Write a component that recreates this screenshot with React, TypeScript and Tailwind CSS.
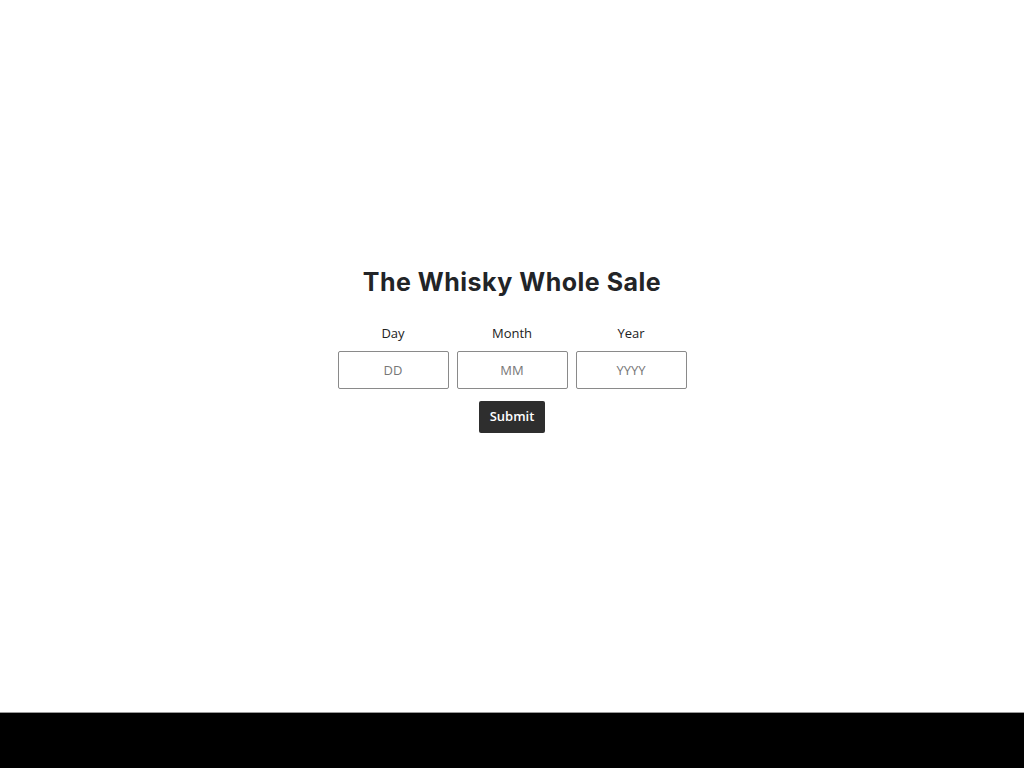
export default function App() {
  const fields = [
    { label: "Day", placeholder: "DD" },
    { label: "Month", placeholder: "MM" },
    { label: "Year", placeholder: "YYYY" },
  ];
  return (
    <div className="flex h-[768px] w-full flex-col bg-white">
      <main className="flex h-[712px] flex-col items-center justify-center pb-[14px]">
        <h1
          className="text-[25px] font-bold leading-[32px] text-[#222427] tracking-[0.5px]"
          style={{ fontFamily: "Inter, 'Noto Sans', sans-serif" }}
        >
          The Whisky Whole Sale
        </h1>
        <form
          className="mt-[26px] flex flex-col items-center"
          style={{ fontFamily: "'Open Sans', sans-serif" }}
          onSubmit={(e) => e.preventDefault()}
        >
          <div className="flex gap-[8px]">
            {fields.map((f) => (
              <label key={f.label} className="flex w-[111px] flex-col items-center">
                <span className="text-[13px] leading-[18px] text-[#222]">{f.label}</span>
                <input
                  placeholder={f.placeholder}
                  className="mt-[9px] h-[38px] w-[111px] rounded-[2px] border border-[#8a8a8a] text-center text-[13px] text-[#333] placeholder:text-[#777] outline-none"
                />
              </label>
            ))}
          </div>
          <button
            type="submit"
            className="mt-[12px] h-[32px] w-[66px] rounded-[2px] bg-[#2e2e2e] text-[13px] font-semibold text-white"
          >
            Submit
          </button>
        </form>
      </main>
      <footer className="h-[56px] border-t border-[#9a9a9a] bg-black" />
    </div>
  );
}
